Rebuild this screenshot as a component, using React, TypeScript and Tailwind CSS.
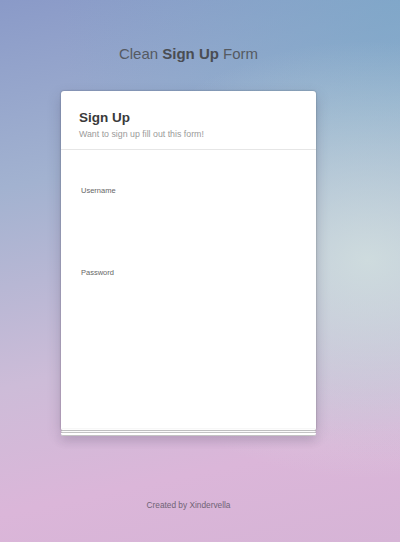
export default function App() {
  return (
    <div
      className="relative flex h-[542px] w-[400px] flex-col items-center overflow-hidden pr-[23px] bg-[radial-gradient(ellipse_at_92%_48%,rgba(212,226,224,0.85),rgba(212,226,224,0)_55%),radial-gradient(ellipse_at_100%_0%,rgba(120,168,200,0.7),rgba(120,168,200,0)_60%),linear-gradient(168deg,#8a9ac8_0%,#a2b2d0_30%,#cdbcd8_62%,#dbb6d9_82%,#d6b4d6_100%)]"
      style={{ fontFamily: '"Liberation Sans", Arial, sans-serif' }}
    >
      <h1 className="mt-[45px] text-[15px] leading-[17px] text-[#555a62]">
        Clean <b className="font-bold text-[#4a4d53]">Sign Up</b> Form
      </h1>

      {/* Card */}
      <div className="mt-[29px] w-[255px]">
        <div className="rounded-t-[3px] bg-white shadow-[0_0_2px_rgba(0,0,0,0.35),0_6px_14px_rgba(60,50,80,0.25)]">
          <div className="border-b border-[#e6e6e6] px-[18px] pb-[9px] pt-[18px]">
            <h2 className="text-[13.5px] font-bold leading-[17px] text-[#3a3a3a]">Sign Up</h2>
            <p className="mt-[2px] text-[8.8px] leading-[12px] text-[#9a9a9a]">Want to sign up fill out this form!</p>
          </div>
          <div className="h-[279px] px-[20px] pt-[36px]">
            <label className="block text-[7.5px] leading-[9px] text-[#666]">Username</label>
            <div className="h-[73px]" />
            <label className="block text-[7.5px] leading-[9px] text-[#666]">Password</label>
          </div>
        </div>
        <div className="h-[2px] rounded-b-[2px] border-b border-[#c8c8c8] bg-white shadow-[0_0_1px_rgba(0,0,0,0.3)]" />
        <div className="h-[2px] rounded-b-[2px] border-b border-[#c8c8c8] bg-white shadow-[0_0_1px_rgba(0,0,0,0.3)]" />
        <div className="h-[3px] rounded-b-[2px] border-b border-[#c4c4c4] bg-white shadow-[0_4px_8px_rgba(60,50,80,0.25)]" />
      </div>

      <p className="mt-[64px] text-[8.3px] leading-[10px] text-[#6f6375]">Created by Xindervella</p>
    </div>
  );
}
